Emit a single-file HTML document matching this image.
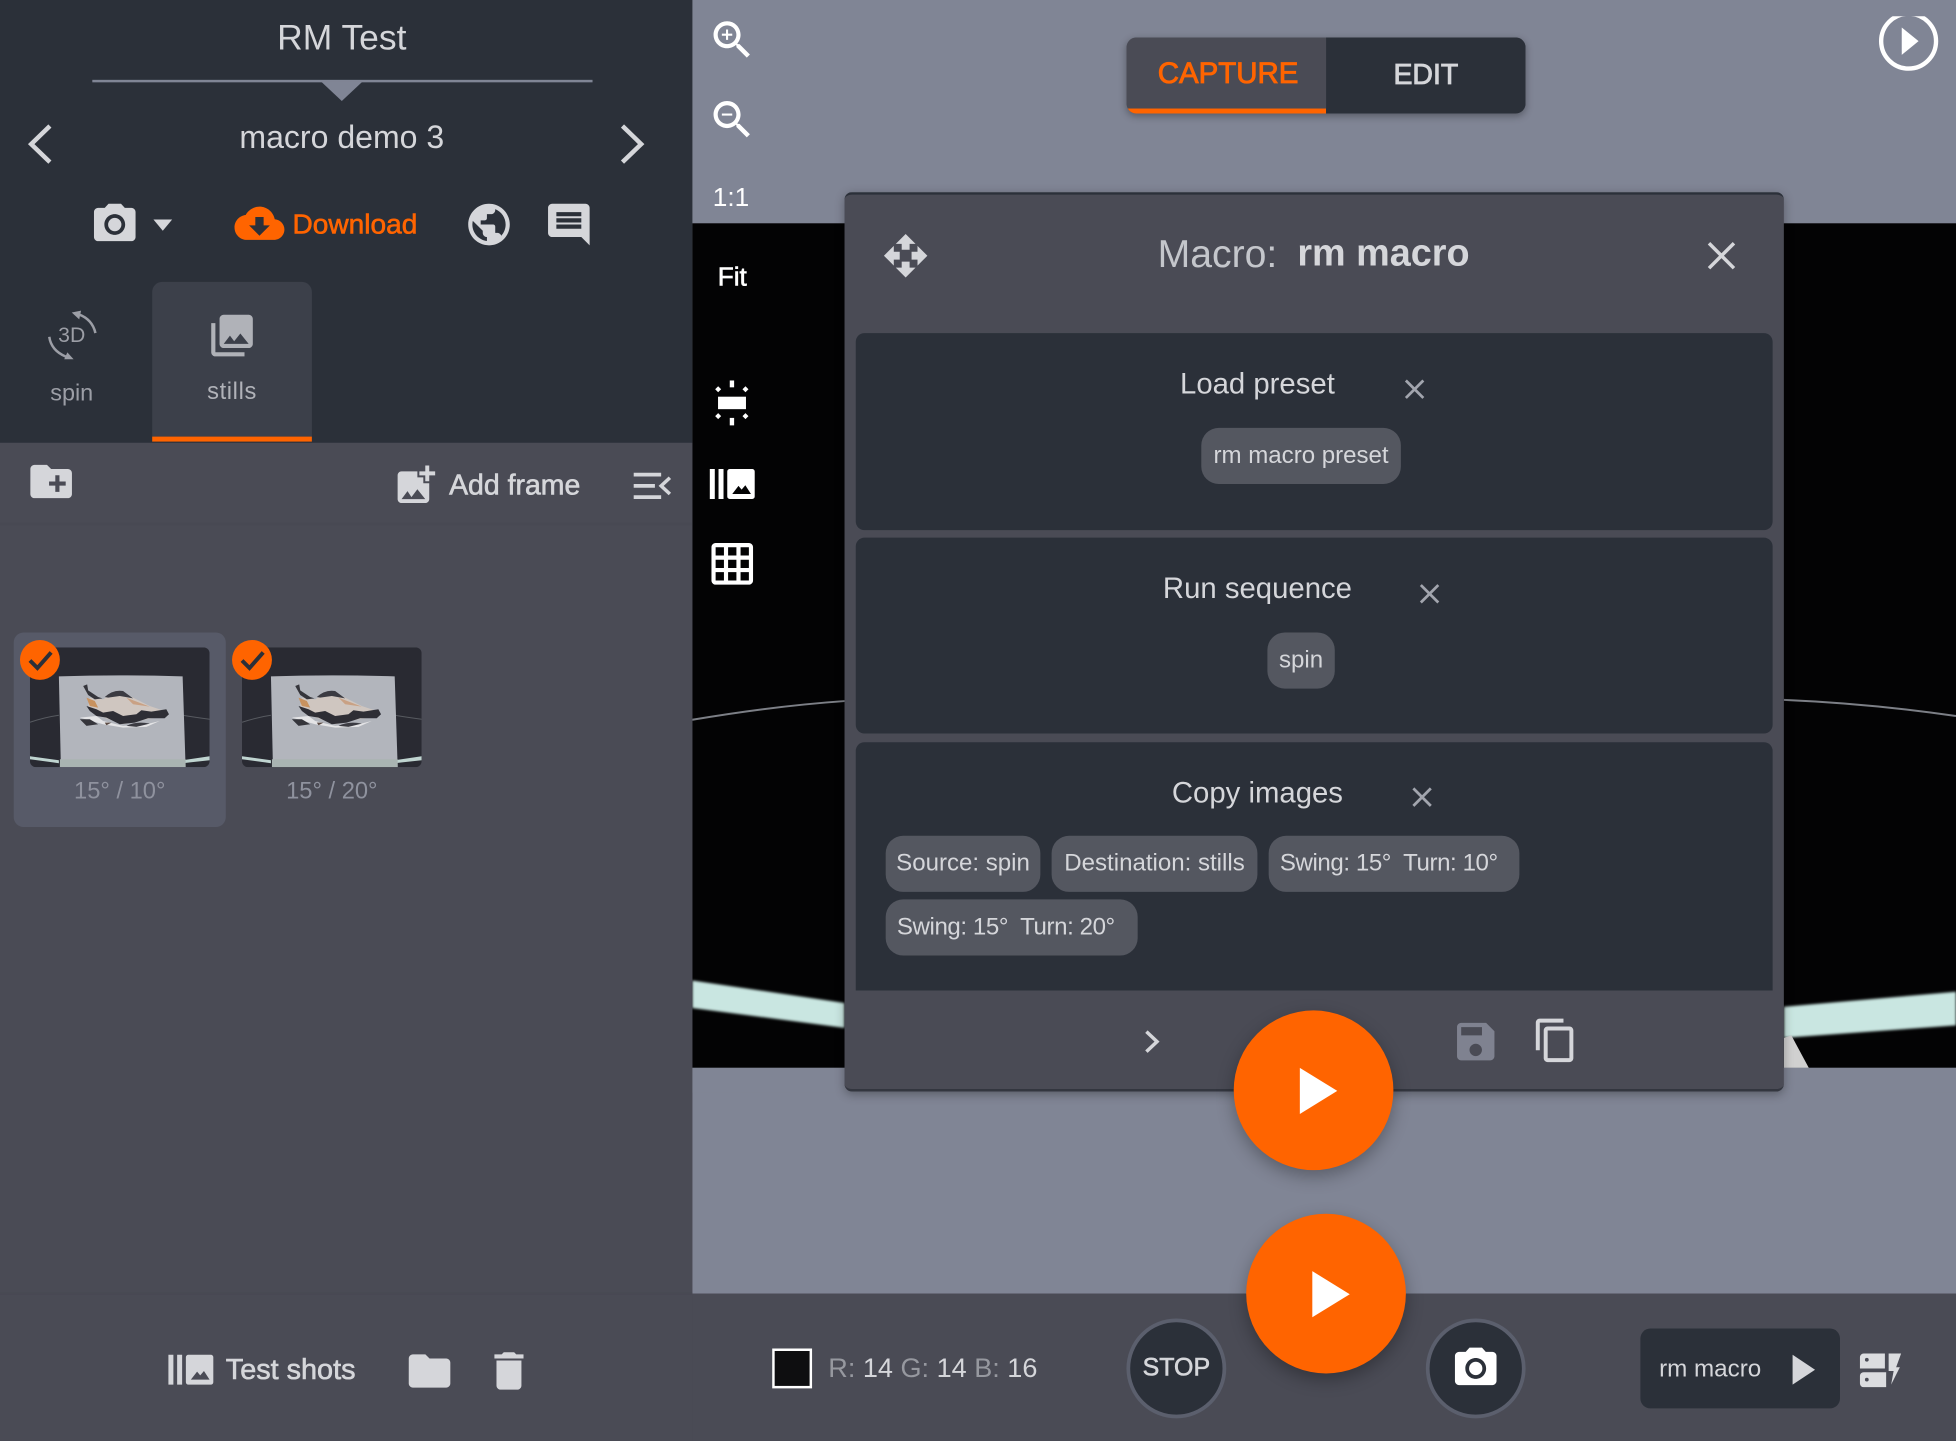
<!DOCTYPE html>
<html lang="en">
<head>
<meta charset="utf-8">
<title>RM Test</title>
<style>
html,body{margin:0;padding:0;width:1956px;height:1440px;overflow:hidden;background:#4a4b55}
#s{position:absolute;left:0;top:0;width:1568px;height:1155px;transform:scale(1.24745);transform-origin:0 0;overflow:hidden;font-family:"Liberation Sans",Arial,sans-serif;color:#d5d6da}
#s div,#s svg,#s span.a{position:absolute}
.t{white-space:nowrap;text-align:center;transform:translate(-50%,calc(-50% + 1px))}
.l{white-space:nowrap;transform:translateY(calc(-50% + 1px))}
.m{-webkit-text-stroke:.5px currentColor}
.c{height:45px;background:#545760;border-radius:14px;font-size:19.300px;line-height:46px;text-align:center;white-space:nowrap;color:#d5d6da}
.sw{text-align:left;padding-left:9px;box-sizing:border-box;letter-spacing:-.33px}
.sec{left:686px;width:735px;background:#2b3039;border-radius:7px}
svg{display:block;overflow:visible}
</style>
</head>
<body>
<div id="s">
<!-- main background -->
<div style="left:555px;top:0;width:1013px;height:1037px;background:#808595"></div>
<div style="left:555px;top:179px;width:1013px;height:677px;background:#030304"></div>
<svg style="left:0;top:0" width="1568" height="1155">
<defs><filter id="b1"><feGaussianBlur stdDeviation="1"/></filter></defs>
<path d="M555 577Q620 566 677 562" stroke="#7c7f86" stroke-width="1.600" fill="none"/>
<path d="M1430 561Q1500 564 1568 574" stroke="#7c7f86" stroke-width="1.600" fill="none"/>
<path d="M555 786L677 804V824L555 808Z" fill="#c9e6e1" filter="url(#b1)"/>
<path d="M1430 807L1568 795V822L1430 832Z" fill="#c9e6e1" filter="url(#b1)"/>
<path d="M1430 856V832L1436 830L1450 856Z" fill="#d0d0d0"/>
<rect x="555" y="856" width="1013" height="20" fill="#808595"/>
</svg>

<!-- left panel -->
<div style="left:0;top:0;width:555px;height:355px;background:#2b3039"></div>
<div style="left:0;top:355px;width:555px;height:800px;background:#4a4b55"></div>
<div style="left:0;top:419px;width:555px;height:2px;background:#484953"></div>
<div style="left:0;top:1036px;width:555px;height:2px;background:#484953"></div>

<div class="t" style="left:274px;top:29.500px;font-size:28.400px">RM Test</div>
<div style="left:74px;top:64px;width:401px;height:2px;background:#808595"></div>
<svg style="left:0;top:0" width="555" height="355">
<path d="M257 65H291L274 81Z" fill="#808595"/>
<path d="M40 101L25 115.500L40 130" stroke="#d5d6da" stroke-width="3.600" fill="none"/>
<path d="M499 101L514 115.500L499 130" stroke="#d5d6da" stroke-width="3.600" fill="none"/>
<path d="M123 176H138L130.500 185Z" fill="#d5d6da"/>
</svg>
<div class="t" style="left:274px;top:110px;font-size:25.700px">macro demo 3</div>

<svg style="left:72px;top:159.500px" width="40" height="40" viewBox="0 0 24 24" fill="#d5d6da"><circle cx="12" cy="12" r="3.200"/><path d="M9 2 7.170 4H4c-1.100 0-2 .9-2 2v12c0 1.100.9 2 2 2h16c1.100 0 2-.9 2-2V6c0-1.100-.9-2-2-2h-3.170L15 2H9zm3 15c-2.760 0-5-2.240-5-5s2.240-5 5-5 5 2.240 5 5-2.240 5-5 5z"/></svg>
<svg style="left:187.500px;top:159px" width="40" height="40" viewBox="0 0 24 24" fill="#ff6400"><path d="M19.350 10.040C18.670 6.590 15.640 4 12 4 9.110 4 6.600 5.640 5.350 8.040 2.340 8.360 0 10.910 0 14c0 3.310 2.690 6 6 6h13c2.760 0 5-2.240 5-5 0-2.640-2.050-4.780-4.650-4.960zM17 13l-5 5-5-5h3V9h4v4h3z"/></svg>
<div class="l m" style="left:234.500px;top:178.500px;font-size:22.500px;color:#ff6400">Download</div>
<svg style="left:372px;top:159.500px" width="40" height="40" viewBox="0 0 24 24" fill="#d5d6da"><path d="M12 2C6.480 2 2 6.480 2 12s4.480 10 10 10 10-4.480 10-10S17.520 2 12 2zm-1 17.930c-3.950-.49-7-3.850-7-7.930 0-.62.08-1.210.21-1.790L9 15v1c0 1.100.9 2 2 2v1.930zm6.900-2.540c-.26-.81-1-1.390-1.900-1.390h-1v-3c0-.55-.45-1-1-1H8v-2h2c.55 0 1-.45 1-1V7h2c1.100 0 2-.9 2-2v-.41c2.930 1.190 5 4.060 5 7.410 0 2.080-.8 3.970-2.100 5.390z"/></svg>
<svg style="left:436px;top:160px" width="40" height="40" viewBox="0 0 24 24" fill="#d5d6da"><path d="M22 4c0-1.100-.9-2-2-2H4c-1.100 0-2 .9-2 2v12c0 1.100.9 2 2 2h14l4 4V4zm-4 10H6v-2h12v2zm0-3H6V9h12v2zm0-3H6V6h12v2z"/></svg>

<!-- tabs -->
<div style="left:122px;top:226px;width:128px;height:124px;background:#3c404a;border-radius:8px 8px 0 0"></div>
<div style="left:122px;top:350px;width:128px;height:4px;background:#ff6400"></div>
<svg style="left:30px;top:240px" width="56" height="56" viewBox="0 0 56 56" fill="none" stroke="#9c9ea6" stroke-width="2">
<path d="M33 12Q44 16 46.500 27"/><path d="M27.500 10.500L35 9L33.500 16Z" fill="#9c9ea6" stroke="none"/>
<path d="M9.500 30Q11 41 23 46"/><path d="M29 48L21.500 48L24 42.500Z" fill="#9c9ea6" stroke="none"/>
</svg>
<div class="t" style="left:57.500px;top:268px;font-size:17px;color:#9c9ea6">3D</div>
<div class="t" style="left:57.500px;top:313.500px;font-size:18.800px;color:#9c9ea6">spin</div>
<svg style="left:166px;top:249px" width="40" height="40" viewBox="0 0 24 24" fill="#b0b2b8"><path d="M22 16V4c0-1.100-.9-2-2-2H8c-1.100 0-2 .9-2 2v12c0 1.100.9 2 2 2h12c1.100 0 2-.9 2-2zm-11-4l2.030 2.710L16 11l4 5H8l3-4zM2 6v14c0 1.100.9 2 2 2h14v-2H4V6H2z"/></svg>
<div class="t" style="left:186px;top:313.500px;font-size:19px;letter-spacing:.5px;color:#b0b2b8">stills</div>

<!-- toolbar -->
<svg style="left:21px;top:366px" width="40" height="40" viewBox="0 0 24 24" fill="#d5d6da"><path d="M20 6h-8l-2-2H4c-1.110 0-1.990.89-1.990 2L2 18c0 1.110.89 2 2 2h16c1.110 0 2-.89 2-2V8c0-1.110-.89-2-2-2zm-1 8h-3v3h-2v-3h-3v-2h3V9h2v3h3v2z"/></svg>
<svg style="left:313.500px;top:369.500px" width="38" height="38" viewBox="0 0 24 24" fill="#d5d6da"><path d="M19 7v2.990s-1.990.01-2 0V7h-3s.01-1.990 0-2h3V2h2v3h3v2h-3zm-3 4V8h-3V5H5c-1.100 0-2 .9-2 2v12c0 1.100.9 2 2 2h12c1.100 0 2-.9 2-2v-8h-3zM5 19l3-4 2 3 3-4 4 5H5z"/></svg>
<div class="l m" style="left:360px;top:387.500px;font-size:22.800px">Add frame</div>
<svg style="left:500px;top:370px" width="45" height="40" fill="none" stroke="#d5d6da" stroke-width="3"><path d="M8 10.500H30M8 19.500H25M8 28.500H30"/><path d="M37 13L30 19.500L37 26" stroke-width="2.800"/></svg>

<!-- thumbnails -->
<div style="left:11px;top:507px;width:170px;height:156px;background:#575a68;border-radius:8px"></div>
<svg style="left:24px;top:519px" width="144" height="96" viewBox="0 0 180 120">
<defs><clipPath id="cp"><rect width="180" height="120" rx="6"/></clipPath>
<filter id="b2"><feGaussianBlur stdDeviation=".35"/></filter>
<g id="shoe" transform="translate(40,27) scale(.3333)" filter="url(#b2)">
<path d="M60 70L100 75L130 55L180 65L240 95L285 110L290 125L230 135L160 150L90 125L55 95Z" fill="#cfc6c0"/>
<path d="M50 70L75 80L85 100L60 95Z" fill="#c8925f"/>
<path d="M170 70L240 97L190 90Z" fill="#c9a184"/>
<path d="M40 35L52 30L55 48L85 68L98 72L75 75L55 62Z" fill="#35353b"/>
<path d="M105 68Q130 45 160 50L190 72L150 65L115 70Z" fill="#3a3a42"/>
<path d="M50 95L80 105L100 115L130 110L160 125L200 120L215 108L245 112L290 105L298 120L285 132L235 132L195 145L150 150L110 130L80 125L60 110Z" fill="#2e2e36"/>
<path d="M30 130L80 125L100 140L160 155L230 150L270 140L230 158L160 160L100 150Z" fill="#e4e4e6"/>
<path d="M30 135L60 135L85 150L50 155Z" fill="#35353b"/>
<path d="M105 145L125 145L110 153Z" fill="#5a4a42"/>
<path d="M170 155Q200 140 240 148L200 158Z" fill="#3a3a42"/>
</g></defs>
<g clip-path="url(#cp)">
<rect width="180" height="120" fill="#292a32"/>
<path d="M0 75Q15 70 29 68M153 68Q165 70 180 72" stroke="#575a60" stroke-width="1" fill="none"/>
<path d="M0 109L29 113V116L0 112ZM153 113L180 109V113L153 116Z" fill="#bfd4d0"/>
<path d="M29 29Q90 27 153 29L156 120H31Z" fill="#b2b5bc"/>
<path d="M30 112H156V120H30Z" fill="#a9b4b2"/>
<use href="#shoe"/>
</g>
</svg>
<svg style="left:194px;top:519px" width="144" height="96" viewBox="0 0 180 120">
<g clip-path="url(#cp)">
<rect width="180" height="120" fill="#292a32"/>
<path d="M0 75Q15 70 29 68M153 68Q165 70 180 72" stroke="#575a60" stroke-width="1" fill="none"/>
<path d="M0 109L29 113V116L0 112ZM153 113L180 109V113L153 116Z" fill="#bfd4d0"/>
<path d="M29 29Q90 27 153 29L156 120H31Z" fill="#b2b5bc"/>
<path d="M30 112H156V120H30Z" fill="#a9b4b2"/>
<use href="#shoe"/>
</g>
</svg>
<svg style="left:0;top:500px" width="240" height="60">
<circle cx="32" cy="29" r="16" fill="#ff6400"/><path d="M24 29.500L30 35.500L41 23" stroke="#2b3039" stroke-width="3.200" fill="none"/>
<circle cx="202" cy="29" r="16" fill="#ff6400"/><path d="M194 29.500L200 35.500L211 23" stroke="#2b3039" stroke-width="3.200" fill="none"/>
</svg>
<div class="t" style="left:96px;top:633.500px;font-size:19px;color:#8f929e">15° / 10°</div>
<div class="t" style="left:266px;top:633.500px;font-size:19px;color:#8f929e">15° / 20°</div>

<!-- left bottom -->
<svg style="left:135px;top:1086px" width="36" height="24" fill="#d5d6da"><path d="M0 0H4V24H0ZM7 0H11V24H7Z"/><path d="M16 0H34a2 2 0 0 1 2 2V22a2 2 0 0 1-2 2H16a2 2 0 0 1-2-2V2a2 2 0 0 1 2-2ZM18 20H33L28.500 13L25.500 16.500L23 13.500Z" fill-rule="evenodd"/></svg>
<div class="l m" style="left:181px;top:1097px;font-size:23.100px">Test shots</div>
<svg style="left:327px;top:1079px" width="34" height="40" viewBox="1.600 0 20.400 24" fill="#d5d6da"><path d="M10 4H4c-1.100 0-1.990.9-1.990 2L2 18c0 1.100.9 2 2 2h16c1.100 0 2-.9 2-2V8c0-1.100-.9-2-2-2h-8l-2-2z"/></svg>
<svg style="left:388px;top:1079px" width="40" height="40" viewBox="0 0 24 24" fill="#d5d6da"><path d="M6 19c0 1.100.9 2 2 2h8c1.100 0 2-.9 2-2V7H6v12zM19 4h-3.500l-1-1h-5l-1 1H5v2h14V4z"/></svg>

<!-- view tools -->
<svg style="left:567px;top:12px" width="40" height="40" viewBox="0 0 24 24" fill="#fff"><path d="M15.500 14h-.79l-.28-.27C15.410 12.590 16 11.110 16 9.500 16 5.910 13.090 3 9.500 3S3 5.910 3 9.500 5.910 16 9.500 16c1.610 0 3.090-.59 4.230-1.570l.27.28v.79l5 4.990L20.490 19l-4.990-5zm-6 0C7.010 14 5 11.990 5 9.500S7.010 5 9.500 5 14 7.010 14 9.500 11.990 14 9.500 14z"/><path d="M12 10h-2v2H9v-2H7V9h2V7h1v2h2v1z"/></svg>
<svg style="left:567px;top:76px" width="40" height="40" viewBox="0 0 24 24" fill="#fff"><path d="M15.500 14h-.79l-.28-.27C15.410 12.590 16 11.110 16 9.500 16 5.910 13.090 3 9.500 3S3 5.910 3 9.500 5.910 16 9.500 16c1.610 0 3.090-.59 4.230-1.570l.27.28v.79l5 4.990L20.490 19l-4.990-5zm-6 0C7.010 14 5 11.990 5 9.500S7.010 5 9.500 5 14 7.010 14 9.500 11.990 14 9.500 14z"/><path d="M7 9h5v1H7z"/></svg>
<div class="t" style="left:586px;top:158px;font-size:21px;color:#fff">1:1</div>
<div class="t m" style="left:587px;top:222px;font-size:21px;color:#fff">Fit</div>
<svg style="left:570px;top:303px" width="34" height="40" fill="#fff"><rect x="5.600" y="15" width="22.400" height="10"/><rect x="15" y="2" width="3.500" height="5.500"/><rect x="15" y="32" width="3.500" height="6"/><path d="M5.700 6.600L8.100 9L5.700 11.400L3.300 9ZM27.600 6.600L30 9L27.600 11.400L25.200 9ZM5.700 28.200L8.100 30.600L5.700 33L3.300 30.600ZM27.600 28.200L30 30.600L27.600 33L25.200 30.600Z"/></svg>
<svg style="left:569px;top:376px" width="36" height="24" fill="#fff"><path d="M0 0H4V24H0ZM7 0H11V24H7Z"/><path d="M16 0H34a2 2 0 0 1 2 2V22a2 2 0 0 1-2 2H16a2 2 0 0 1-2-2V2a2 2 0 0 1 2-2ZM18 20H33L28.500 13L25.500 16.500L23 13.500Z" fill-rule="evenodd"/></svg>
<svg style="left:567px;top:432px" width="40" height="40" viewBox="0 0 24 24" fill="#fff"><path d="M20 2H4c-1.100 0-2 .9-2 2v16c0 1.100.9 2 2 2h16c1.100 0 2-.9 2-2V4c0-1.100-.9-2-2-2zM8 20H4v-4h4v4zm0-6H4v-4h4v4zm0-6H4V4h4v4zm6 12h-4v-4h4v4zm0-6h-4v-4h4v4zm0-6h-4V4h4v4zm6 12h-4v-4h4v4zm0-6h-4v-4h4v4zm0-6h-4V4h4v4z"/></svg>

<!-- top switch -->
<div style="left:903px;top:30px;width:320px;height:61px;border-radius:8px;overflow:hidden;box-shadow:0 2px 6px rgba(0,0,0,.3)">
<div style="left:0;top:0;width:160px;height:61px;background:#4a4b55"></div>
<div style="left:0;top:57px;width:160px;height:4px;background:#ff6400"></div>
<div style="left:160px;top:0;width:160px;height:61px;background:#2b3039"></div>
</div>
<div class="t m" style="left:984.500px;top:59px;font-size:23.600px;color:#ff6400;-webkit-text-stroke-width:.7px">CAPTURE</div>
<div class="t m" style="left:1143px;top:58.500px;font-size:22.800px;-webkit-text-stroke-width:.7px">EDIT</div>
<svg style="left:1500px;top:4px" width="60" height="60"><defs><clipPath id="pc"><rect x="0" y="9" width="60" height="52"/></clipPath></defs><circle cx="30" cy="29" r="22" fill="none" stroke="#fff" stroke-width="3.500" clip-path="url(#pc)"/><path d="M24.500 18L38 29L24.500 40Z" fill="#fff"/></svg>

<!-- bottom bar -->
<div style="left:555px;top:1037px;width:1013px;height:118px;background:#4a4b55"></div>
<div style="left:619px;top:1081px;width:28px;height:28px;background:#0e0e10;border:2px solid #fff"></div>
<div class="l" style="left:664px;top:1096px;font-size:21.700px;white-space:pre"><span style="color:#96989f">R:</span> 14 <span style="color:#96989f">G:</span> 14 <span style="color:#96989f">B:</span> 16</div>
<div style="left:903px;top:1057px;width:74px;height:74px;border-radius:50%;background:#2b3039;border:3px solid #5b5f6d"></div>
<div class="t m" style="left:943px;top:1096px;font-size:20px">STOP</div>
<div style="left:1143px;top:1057px;width:74px;height:74px;border-radius:50%;background:#2b3039;border:3px solid #5b5f6d"></div>
<svg style="left:1163px;top:1077px" width="40" height="40" viewBox="0 0 24 24" fill="#fff"><circle cx="12" cy="12" r="3.200"/><path d="M9 2 7.170 4H4c-1.100 0-2 .9-2 2v12c0 1.100.9 2 2 2h16c1.100 0 2-.9 2-2V6c0-1.100-.9-2-2-2h-3.170L15 2H9zm3 15c-2.760 0-5-2.240-5-5s2.240-5 5-5 5 2.240 5 5-2.240 5-5 5z"/></svg>
<div style="left:1315px;top:1065px;width:160px;height:64px;background:#2b3039;border-radius:8px"></div>
<div class="l" style="left:1330px;top:1097px;font-size:19.400px">rm macro</div>
<svg style="left:1437px;top:1086px" width="18" height="24"><path d="M0 0L18 12L0 24Z" fill="#d5d6da"/></svg>
<svg style="left:1490px;top:1084px" width="36" height="30" fill="#dcdde0"><path d="M4 1H21V13H1V4a3 3 0 0 1 3-3ZM24 1H34L30 12H33L26 26L28 15H24Z"/><path d="M4 16H22V28H4a3 3 0 0 1-3-3V19a3 3 0 0 1 3-3Z"/><circle cx="6.500" cy="6" r="1.500" fill="#4a4b55"/><circle cx="6.500" cy="22" r="1.500" fill="#4a4b55"/></svg>

<!-- modal -->
<div style="left:677px;top:154px;width:753px;height:721px;background:#4a4b55;border-radius:6px;border-top:2px solid #2b3039;box-sizing:border-box;border-bottom:2px solid #33363f;box-shadow:0 2px 8px rgba(0,0,0,.3)"></div>
<svg style="left:707px;top:186px" width="38" height="38" viewBox="0 0 24 24" fill="#d5d6da"><path d="M10 9h4V6h3l-5-5-5 5h3v3zm-1 1H6V7l-5 5 5 5v-3h3v-4zm14 2l-5-5v3h-3v4h3v3l5-5zm-9 3h-4v3H7l5 5 5-5h-3v-3z"/></svg>
<div class="l" style="left:928px;top:203px;font-size:31.400px;color:#c4c6cb">Macro:</div>
<div class="l" style="left:1040px;top:203px;font-size:30.300px;font-weight:bold;color:#d5d6da">rm macro</div>
<svg style="left:1369px;top:194px" width="22" height="22"><path d="M1 1L21 21M21 1L1 21" stroke="#d5d6da" stroke-width="2.800"/></svg>

<div class="sec" style="top:267px;height:158px"></div>
<div class="sec" style="top:431px;height:157px"></div>
<div class="sec" style="top:595px;height:199px;border-radius:7px 7px 0 0"></div>

<div class="t" style="left:1008px;top:307px;font-size:23.500px">Load preset</div>
<svg style="left:1126px;top:304px" width="16" height="16"><path d="M1 1L15 15M15 1L1 15" stroke="#a2a5ae" stroke-width="2.200"/></svg>
<div class="c" style="left:963px;top:343px;width:160px">rm macro preset</div>

<div class="t" style="left:1008px;top:470.500px;font-size:23.500px">Run sequence</div>
<svg style="left:1138px;top:468px" width="16" height="16"><path d="M1 1L15 15M15 1L1 15" stroke="#a2a5ae" stroke-width="2.200"/></svg>
<div class="c" style="left:1016px;top:507px;width:54px">spin</div>

<div class="t" style="left:1008px;top:634.500px;font-size:23.500px">Copy images</div>
<svg style="left:1132px;top:631px" width="16" height="16"><path d="M1 1L15 15M15 1L1 15" stroke="#a2a5ae" stroke-width="2.200"/></svg>
<div class="c" style="left:710px;top:670px;width:124px">Source: spin</div>
<div class="c" style="left:843px;top:670px;width:165px">Destination: stills</div>
<div class="c sw" style="left:1017px;top:670px;width:201px">Swing: 15°&nbsp; Turn: 10°</div>
<div class="c sw" style="left:710px;top:721px;width:202px">Swing: 15°&nbsp; Turn: 20°</div>

<svg style="left:912px;top:822px" width="24" height="26"><path d="M7 5L15.500 13L7 21" fill="none" stroke="#d5d6da" stroke-width="2.800"/></svg>
<svg style="left:1163px;top:815px" width="40" height="40" viewBox="0 0 24 24" fill="#7f8290"><path d="M17 3H5c-1.110 0-2 .9-2 2v14c0 1.100.89 2 2 2h14c1.100 0 2-.9 2-2V7l-4-4zm-5 16c-1.660 0-3-1.340-3-3s1.340-3 3-3 3 1.340 3 3-1.340 3-3 3zm3-10H5V5h10v4z"/></svg>
<svg style="left:1228px;top:815px" width="38" height="38" viewBox="0 0 24 24" fill="#d5d6da"><path d="M16 1H4c-1.100 0-2 .9-2 2v14h2V3h12V1zm3 4H8c-1.100 0-2 .9-2 2v14c0 1.100.9 2 2 2h11c1.100 0 2-.9 2-2V7c0-1.100-.9-2-2-2zm0 16H8V7h11v14z"/></svg>

<!-- play buttons -->
<div style="left:989px;top:809.500px;width:128px;height:128px;border-radius:50%;background:#ff6400;box-shadow:0 5px 14px rgba(0,0,0,.3)"></div>
<svg style="left:1042px;top:855.500px" width="30" height="37"><path d="M0 0L30 18.500L0 37Z" fill="#fff"/></svg>
<div style="left:999px;top:973px;width:128px;height:128px;border-radius:50%;background:#ff6400;box-shadow:0 5px 14px rgba(0,0,0,.3)"></div>
<svg style="left:1052px;top:1019px" width="30" height="37"><path d="M0 0L30 18.500L0 37Z" fill="#fff"/></svg>
</div>
</body>
</html>
